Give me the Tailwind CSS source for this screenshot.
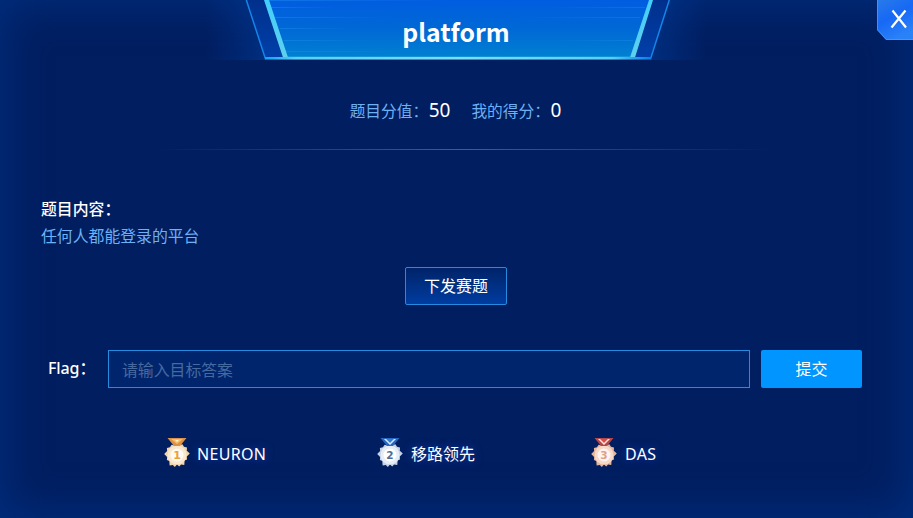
<!DOCTYPE html>
<html lang="zh-CN">
<head>
<meta charset="utf-8">
<title>platform</title>
<script src="https://cdn.jsdelivr.net/npm/@tailwindcss/browser@4"></script>
</head>
<body class="overflow-hidden bg-[#001e60]">
<main class="relative flex h-[518px] w-[913px] flex-col overflow-hidden bg-[#001e60] font-['Noto_Sans','Noto_Sans_CJK_SC',sans-serif] text-base text-white shadow-[inset_0_0_42px_6px_#002d7c]">
  <header class="grid h-[60px] shrink-0 justify-center">
    <svg class="col-start-1 row-start-1" width="513" height="60" viewBox="200 0 513 60">
      <defs>
        <linearGradient id="panel" x1="0" y1="0" x2="0" y2="1"><stop offset="0" stop-color="#005de0"/><stop offset=".5" stop-color="#0069d5"/><stop offset="1" stop-color="#0082d2"/></linearGradient>
        <linearGradient id="edge" x1="0" y1="0" x2="0" y2="1"><stop offset="0" stop-color="#42cffc"/><stop offset="1" stop-color="#5fd0ec"/></linearGradient>
        <linearGradient id="glowL"><stop offset="0" stop-color="#003c9e" stop-opacity="0"/><stop offset="1" stop-color="#00409f" stop-opacity=".5"/></linearGradient>
        <linearGradient id="glowR"><stop offset="0" stop-color="#00409f" stop-opacity=".5"/><stop offset="1" stop-color="#003c9e" stop-opacity="0"/></linearGradient>
        <linearGradient id="wing" x1="0" y1="0" x2="0" y2="1"><stop offset="0" stop-color="#00308c"/><stop offset="1" stop-color="#0040aa"/></linearGradient>
        <linearGradient id="base"><stop offset="0" stop-color="#169ff5"/><stop offset=".08" stop-color="#58cffa"/><stop offset=".5" stop-color="#7dddff"/><stop offset=".9" stop-color="#58cffa"/><stop offset="1" stop-color="#087bea"/></linearGradient>
        <linearGradient id="streak"><stop offset="0" stop-color="#1c8df0" stop-opacity=".5"/><stop offset="1" stop-color="#1c8df0" stop-opacity="0"/></linearGradient>
        <linearGradient id="streakR"><stop offset="0" stop-color="#1c8df0" stop-opacity="0"/><stop offset="1" stop-color="#1c8df0" stop-opacity=".4"/></linearGradient>
      </defs>
      <path d="M205 0h41l20 60h-61z" fill="url(#glowL)"/>
      <path d="M669 0h38v60h-57z" fill="url(#glowR)"/>
      <path d="M246 0h423l-19 59H266z" fill="url(#wing)"/>
      <path d="M265 0h386l-20 59H286z" fill="url(#panel)"/>
      <g fill="url(#streak)"><rect x="268" y="0" width="180" height="1"/><rect x="271" y="7" width="65" height="1"/><rect x="275" y="17" width="115" height="1"/><rect x="280" y="28" width="70" height="1"/><rect x="284" y="40" width="85" height="1"/><rect x="286" y="51" width="120" height="1"/></g>
      <g fill="url(#streakR)"><rect x="545" y="7" width="100" height="1"/><rect x="520" y="17" width="120" height="1"/><rect x="555" y="40" width="78" height="1"/></g>
      <rect x="286" y="56" width="347" height="1" fill="#2bb0df" opacity=".4"/>
      <path d="M246.300 0l19.200 59M669.300 0l-18.800 59" fill="none" stroke="#1585e8" stroke-width="1.5"/>
      <path d="M264 0h5l19.500 59h-5zM649 0h4l-18.500 59h-5z" fill="url(#edge)"/>
      <rect x="265" y="57" width="386" height="2" fill="url(#base)"/>
      <rect x="265" y="59" width="386" height="1" fill="url(#base)" opacity=".55"/>
    </svg>
    <h1 class="relative -left-[0.500px] col-start-1 row-start-1 mt-[14px] text-center font-['Noto_Sans_CJK_SC',sans-serif] text-[24.800px] leading-[35px] font-bold">platform</h1>
  </header>
  <button aria-label="关闭" class="absolute top-0 right-0 h-10 w-9">
    <svg width="36" height="40" viewBox="0 0 36 40">
      <defs><linearGradient id="close" x1="0" y1="0" x2=".5" y2="1"><stop stop-color="#287be9"/><stop offset=".5" stop-color="#1768f5"/><stop offset="1" stop-color="#2a82f7"/></linearGradient></defs>
      <path d="M0 0h36v40H9L0 30z" fill="url(#close)"/><path d="M.5 0v29.800L9.300 39.500H36" fill="none" stroke="#38a5f6" opacity=".75"/>
      <path d="M15.500 10.500l13.500 17M28.500 10.500L14.500 27.500" fill="none" stroke="#fff" stroke-width="2.200"/>
    </svg>
  </button>
  <section class="flex h-[89px] shrink-0 items-center justify-center gap-[21px] pt-[12px] pr-[2px] text-[#6db0f4]">
    <p class="flex items-center"><span class="w-[79px] pt-[2px] text-[15.700px] whitespace-nowrap">题目分值：</span><b class="text-[19px] font-normal text-white">50</b></p>
    <p class="flex items-center"><span class="w-[79px] pt-[2px] text-[15.700px] whitespace-nowrap">我的得分：</span><b class="text-[19px] font-normal text-white">0</b></p>
  </section>
  <div class="ml-[152px] h-px w-[622px] shrink-0 bg-linear-to-r from-transparent via-[#2564b3] to-transparent"></div>
  <section class="mt-[46px] h-[71px] shrink-0 pl-[41px] text-[15.850px] leading-[27px]">
    <h2 class="font-medium">题目内容：</h2>
    <p class="text-[#6db0f4]">任何人都能登录的平台</p>
  </section>
  <button class="ml-[405px] h-[38px] w-[102px] shrink-0 rounded-[2px] border border-[#248be0] bg-linear-to-b from-[#002369] to-[#003da0] leading-[36px]">下发赛题</button>
  <form class="mt-[45px] flex h-[38px] shrink-0 items-center pl-12">
    <label class="w-[60px] pb-[2px] font-medium tracking-[-0.100px] whitespace-nowrap">Flag：</label>
    <input class="h-[38px] w-[642px] border border-[#248be0] bg-[#00256d] px-[13px] pt-[1px] text-[15.850px] placeholder:text-[#46699f]" placeholder="请输入目标答案">
    <button type="button" class="ml-[11px] h-[38px] w-[101px] rounded-[2px] bg-[#0095ff]">提交</button>
  </form>
  <svg class="hidden"><defs>
    <path id="cog" d="M13 5l2.400 2 3-.7 1.600 2.500 3 .8-.2 3.100 3 2.900-3 2.900.2 3.100-2.400 1-.3 4.400-3.200-.4-1.900 1.900-2.200-1.900L10.800 29l-2-1.900-3.200.4-.3-4.400-2.400-1 .2-3.100L.2 16l2.900-2.900-.2-3.100 3-.8L7.600 6.700l3 .7z"/>
  </defs></svg>
  <ol class="mt-[50px] flex shrink-0 pl-[164px]">
    <li class="flex h-[32px] w-[213px] items-center gap-[7px]">
      <svg class="mb-[1px]" width="26" height="31" viewBox="0 0 26 31"><use href="#cog" fill="#f0d4aa"/><circle cx="13" cy="17" r="9.500" fill="#f9e8cf"/><circle cx="13" cy="17" r="6.500" fill="#fffaf1"/><path d="M3.500 0h19l-6.500 8h-6z" fill="#dc9148"/><path d="M7 1h12l-6 5z" fill="#f9bd67"/><path d="M11 2h4l-2 2z" fill="#fff0c9"/><text x="13" y="21" text-anchor="middle" font-family="DejaVu Sans" font-size="11" font-weight="bold" fill="#e9a140">1</text></svg>
      <span class="tracking-[0.300px] [text-shadow:0_0_8px_#173fbd]">NEURON</span></li>
    <li class="flex h-[32px] w-[214px] items-center gap-[8px]">
      <svg class="mb-[1px]" width="26" height="31" viewBox="0 0 26 31"><use href="#cog" fill="#c5d2e5"/><circle cx="13" cy="17" r="9.500" fill="#e7edf6"/><circle cx="13" cy="17" r="6.500" fill="#fff"/><path d="M3.500 0h19l-6.500 8h-6z" fill="#2868c0"/><path d="M7 1h12l-6 6z" fill="#d9ebff"/><path d="M9 1h8l-4 4z" fill="#327ed1"/><text x="13" y="21" text-anchor="middle" font-family="DejaVu Sans" font-size="10.500" font-weight="bold" fill="#516b96">2</text></svg>
      <span class="[text-shadow:0_0_8px_#173fbd]">移路领先</span></li>
    <li class="flex h-[32px] items-center gap-[8px]">
      <svg class="mb-[1px]" width="26" height="31" viewBox="0 0 26 31"><use href="#cog" fill="#e6b49a"/><circle cx="13" cy="17" r="9.500" fill="#f6d8c9"/><circle cx="13" cy="17" r="6.500" fill="#fff4ef"/><path d="M3.500 0h19l-6.500 8h-6z" fill="#b5474b"/><path d="M7 1h12l-6 6z" fill="#ffe6dd"/><path d="M9 1h8l-4 4z" fill="#d84e4d"/><text x="13" y="21" text-anchor="middle" font-family="DejaVu Sans" font-size="10.500" font-weight="bold" fill="#dda18d">3</text></svg>
      <span class="tracking-[0.300px] [text-shadow:0_0_8px_#173fbd]">DAS</span></li>
  </ol>
</main>
</body>
</html>
